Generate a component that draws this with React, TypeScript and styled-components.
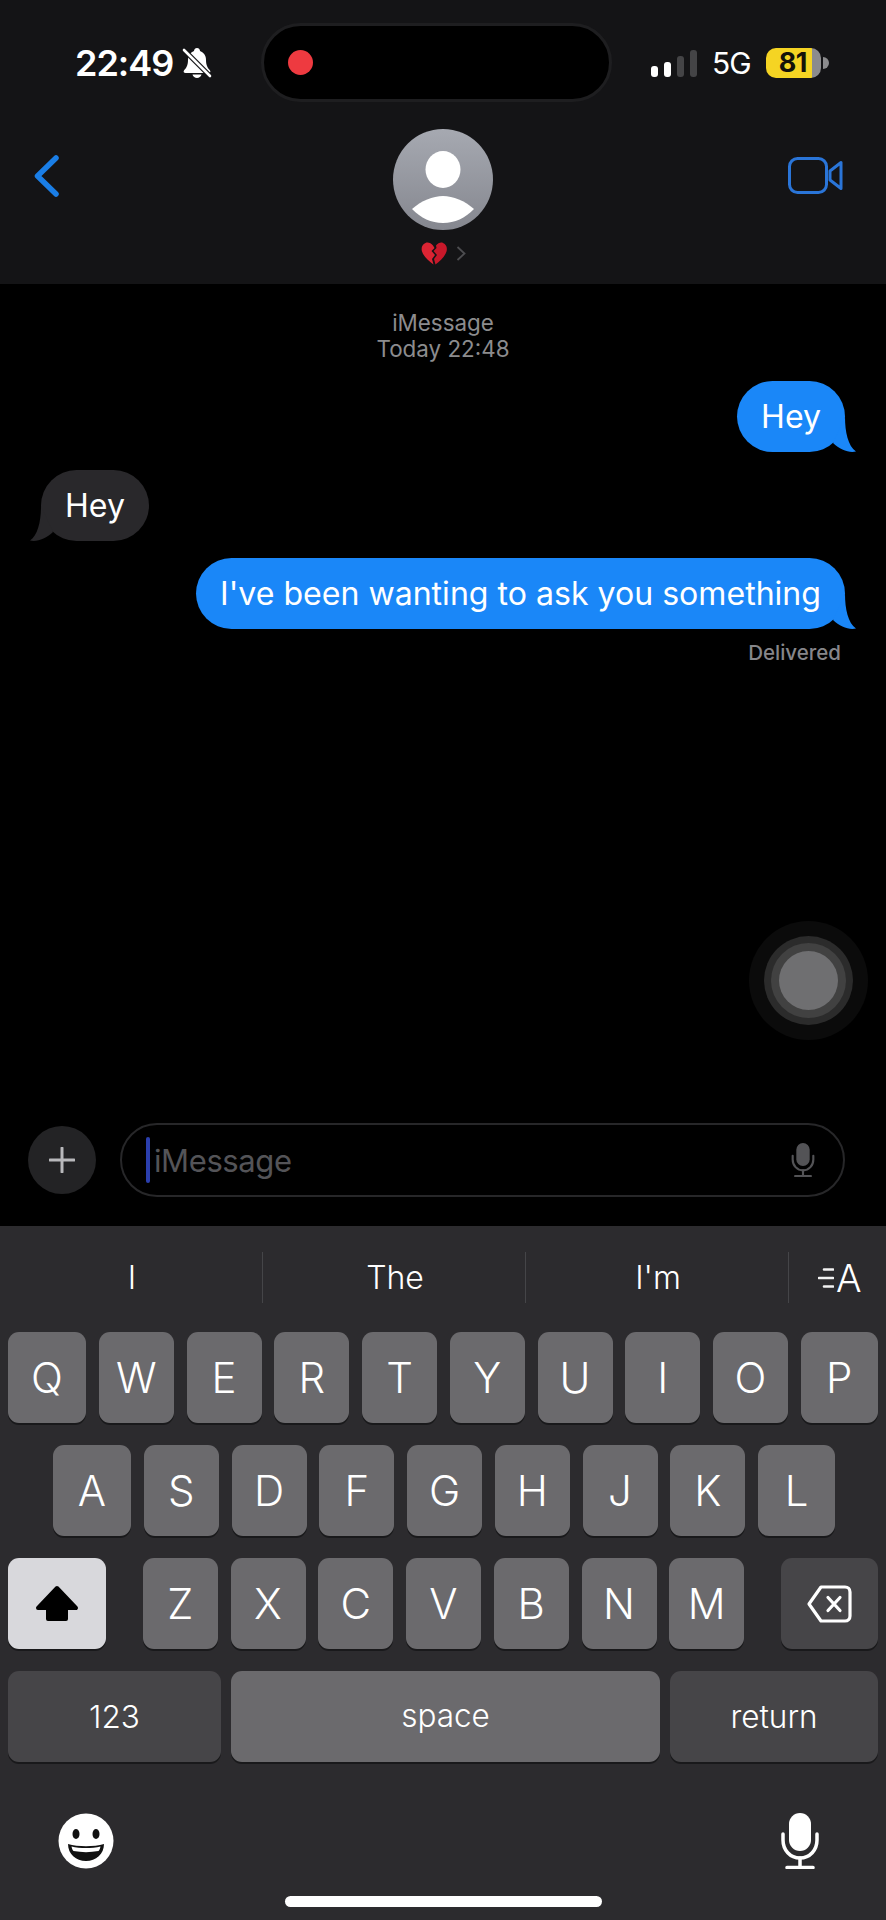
import React from 'react';
import styled, { createGlobalStyle } from 'styled-components';

const GlobalStyle = createGlobalStyle`
    html, body {
        margin: 0;
        padding: 0;
        background: #000;
    }
    body {
        font-family: Inter, "Liberation Sans", sans-serif;
        color: #fff;
    }
`

const ROW_ONE = ['Q', 'W', 'E', 'R', 'T', 'Y', 'U', 'I', 'O', 'P'];
const ROW_TWO = ['A', 'S', 'D', 'F', 'G', 'H', 'J', 'K', 'L'];
const ROW_THREE = ['Z', 'X', 'C', 'V', 'B', 'N', 'M'];

function Tail({ color, $left }: { color: string; $left?: boolean }) {
    return (
        <TailSvg $left={$left} width="30" height="40" viewBox="0 0 30 40">
            <path d="M19 5C19 20 22 34 30 39.5C23 41 14 38 7 31Z" fill={color}/>
        </TailSvg>
    )
}

function MicIcon({ color, width, height, stroke }: { color: string; width: number; height: number; stroke: number }) {
    return (
        <svg width={width} height={height} viewBox="0 0 38 56" fill="none">
            <rect x="8" y="0" width="22" height="38" rx="11" fill={color}/>
            <path d="M2 21V27C2 37 9 45 19 45C29 45 36 37 36 27V21" stroke={color} strokeWidth={stroke} strokeLinecap="round"/>
            <path d="M19 45V54M6 54.500H32" stroke={color} strokeWidth={stroke} strokeLinecap="round"/>
        </svg>
    )
}

function App() {
    return (
        <Screen>
            <GlobalStyle/>
            <Header>
                <StatusBar>
                    <StatusLeft>
                        <Time>22:49</Time>
                        <svg width="30" height="31" viewBox="0 0 30 31">
                            <path d="M15 1C17 1 18 2.500 18 4C22 5.500 24 9 24 13C24 19 26 21 28 23.500C29 25 28 26 26.500 26H3.500C2 26 1 25 2 23.500C4 21 6 19 6 13C6 9 8 5.500 12 4C12 2.500 13 1 15 1Z" fill="#fff"/>
                            <path d="M10.500 27.500H19.500C19 29.500 17 31 15 31C13 31 11 29.500 10.500 27.500Z" fill="#fff"/>
                            <path d="M2 3L28 29" stroke="#141416" strokeWidth="5"/>
                            <path d="M2 3L28 29" stroke="#fff" strokeWidth="2.600" strokeLinecap="round"/>
                        </svg>
                    </StatusLeft>
                    <Island>
                        <RecDot/>
                    </Island>
                    <StatusRight>
                        <Signal>
                            <SignalBar $h={11} $on/>
                            <SignalBar $h={15} $on/>
                            <SignalBar $h={21}/>
                            <SignalBar $h={27}/>
                        </Signal>
                        <Network>5G</Network>
                        <Battery>81</Battery>
                        <BatteryNub/>
                    </StatusRight>
                </StatusBar>
                <Nav>
                    <BackIcon width="25" height="42" viewBox="0 0 25 42" fill="none">
                        <path d="M22 3L3.500 21L22 39" stroke="#1a7ee6" strokeWidth="5.500" strokeLinecap="round" strokeLinejoin="round"/>
                    </BackIcon>
                    <Contact>
                        <svg width="100" height="101" viewBox="0 0 100 101">
                            <defs>
                                <linearGradient id="avatarFill" x1="0" y1="0" x2="0" y2="1">
                                    <stop offset="0" stopColor="#a6a9b1"/>
                                    <stop offset="1" stopColor="#85878f"/>
                                </linearGradient>
                            </defs>
                            <ellipse cx="50" cy="50.500" rx="50" ry="50.500" fill="url(#avatarFill)"/>
                            <ellipse cx="50" cy="40.500" rx="17.500" ry="18.500" fill="#fff"/>
                            <path d="M19 80C28 72 40 67 50 67C60 67 72 72 81 80C72 89 62 94 50 94C38 94 28 89 19 80Z" fill="#fff"/>
                        </svg>
                        <ContactName>
                            <svg width="26" height="23" viewBox="0 0 26 23">
                                <path d="M12 3.500C10 1 7 0 4.500 1C1 2.500 0 6 1 9.500C2.500 14.500 8 19 12.500 22.500L11 17L14 13L10.500 9L13.500 6Z" fill="#dc2433"/>
                                <path d="M15 3.500C17 1 20 0 22 1C25.500 2.500 26.500 6 25.500 9.500C24 14.500 19 19 14.500 22.500L13 17L16 13L12.500 9L15.500 6Z" fill="#c8182a"/>
                            </svg>
                            <svg width="10" height="15" viewBox="0 0 10 15" fill="none">
                                <path d="M1.500 1L8.500 7.500L1.500 14" stroke="#4d4d50" strokeWidth="1.800"/>
                            </svg>
                        </ContactName>
                    </Contact>
                    <VideoIcon width="55" height="37" viewBox="0 0 55 37" fill="none">
                        <rect x="1.500" y="1.500" width="37" height="34" rx="8" stroke="#2a75d8" strokeWidth="3"/>
                        <path d="M42 14L53 5.500V31.500L42 23Z" stroke="#2a75d8" strokeWidth="3" strokeLinejoin="round"/>
                    </VideoIcon>
                </Nav>
            </Header>

            <Thread>
                <ThreadInfo>
                    <div>iMessage</div>
                    <div>Today 22:48</div>
                </ThreadInfo>
                <Bubble $mine>
                    Hey
                    <Tail color="#1a87f8"/>
                </Bubble>
                <Bubble>
                    Hey
                    <Tail color="#29282b" $left/>
                </Bubble>
                <Bubble $mine>
                    I've been wanting to ask you something
                    <Tail color="#1a87f8"/>
                </Bubble>
                <Delivered>Delivered</Delivered>

                <AssistiveTouch/>

                <Composer>
                    <PlusButton>
                        <svg width="26" height="26" viewBox="0 0 26 26" fill="none">
                            <path d="M13 1V25M1 13H25" stroke="#b8b8bb" strokeWidth="3" strokeLinecap="round"/>
                        </svg>
                    </PlusButton>
                    <InputPill>
                        <Caret/>
                        <Placeholder>iMessage</Placeholder>
                        <MicSlot>
                            <MicIcon color="#535356" width={24} height={34} stroke={3.500}/>
                        </MicSlot>
                    </InputPill>
                </Composer>
            </Thread>

            <Keyboard>
                <Suggestions>
                    <Suggestion>I</Suggestion>
                    <Suggestion>The</Suggestion>
                    <Suggestion>I'm</Suggestion>
                    <WritingTools>
                        <svg width="16" height="22" viewBox="0 0 16 22" fill="none">
                            <path d="M6 2.500H15M1 11H15M6 19.500H15" stroke="#f2f2f2" strokeWidth="2.600" strokeLinecap="round"/>
                        </svg>
                        <span>A</span>
                    </WritingTools>
                </Suggestions>

                <LetterRow>
                    {ROW_ONE.map((letter) => <Key key={letter}>{letter}</Key>)}
                </LetterRow>
                <LetterRow $inset>
                    {ROW_TWO.map((letter) => <Key key={letter}>{letter}</Key>)}
                </LetterRow>
                <ShiftRow>
                    <Key $tone="light" $width={98}>
                        <svg width="44" height="37" viewBox="0 0 44 37">
                            <path d="M22 3L41 23H31V34H13V23H3Z" fill="#000" stroke="#000" strokeWidth="4" strokeLinejoin="round"/>
                        </svg>
                    </Key>
                    <LetterGroup>
                        {ROW_THREE.map((letter) => <Key key={letter}>{letter}</Key>)}
                    </LetterGroup>
                    <Key $tone="dark" $width={97}>
                        <svg width="45" height="38" viewBox="0 0 45 38" fill="none">
                            <path d="M14 2H38C41 2 43 4 43 7V31C43 34 41 36 38 36H14L2 19Z" stroke="#fff" strokeWidth="3.200" strokeLinejoin="round"/>
                            <path d="M21 12.500L33 25.500M33 12.500L21 25.500" stroke="#fff" strokeWidth="3.200" strokeLinecap="round"/>
                        </svg>
                    </Key>
                </ShiftRow>
                <BottomRow>
                    <ActionKey $tone="dark" $width={213}>123</ActionKey>
                    <ActionKey $width={429} $lift={3}>space</ActionKey>
                    <ActionKey $tone="dark" $width={208}>return</ActionKey>
                </BottomRow>

                <KeyboardFooter>
                    <svg width="56" height="56" viewBox="0 0 56 56">
                        <circle cx="28" cy="28" r="27.500" fill="#fff"/>
                        <ellipse cx="18" cy="21" rx="3.500" ry="5" fill="#111"/>
                        <ellipse cx="38" cy="21" rx="3.500" ry="5" fill="#111"/>
                        <path d="M10 31C20 34 36 34 46 31C46 41 38 48 28 48C18 48 10 41 10 31Z" fill="#111"/>
                        <path d="M13.500 33.500C22 35.500 34 35.500 42.500 33.500C42 35.500 41.500 37 40.500 38C32 39.500 24 39.500 15.500 38C14.500 37 14 35.500 13.500 33.500Z" fill="#fff"/>
                    </svg>
                    <MicIcon color="#fff" width={38} height={56} stroke={3.500}/>
                </KeyboardFooter>
                <HomeBar/>
            </Keyboard>
        </Screen>
    )
}

const Screen = styled.div`
    width: 886px;
    height: 1920px;
    display: flex;
    flex-direction: column;
    overflow: hidden;
    background-color: #000;
`

const Header = styled.header`
    height: 284px;
    flex: none;
    background-color: #141416;
`

const StatusBar = styled.div`
    display: grid;
    grid-template-columns: 261px 351px 1fr;
    padding-top: 23px;
    height: 79px;
`

const StatusLeft = styled.div`
    display: flex;
    align-items: center;
    gap: 9px;
    padding-left: 75px;
`

const Time = styled.span`
    font-size: 36px;
    font-weight: 600;
    letter-spacing: -1px;
`

const Island = styled.div`
    display: flex;
    align-items: center;
    height: 79px;
    box-sizing: border-box;
    padding-left: 24px;
    border: 3px solid #1e1e20;
    border-radius: 40px;
    background-color: #000;
`

const RecDot = styled.div`
    width: 25px;
    height: 25px;
    border-radius: 50%;
    background-color: #ee3a40;
`

const StatusRight = styled.div`
    display: flex;
    align-items: center;
    padding-left: 39px;
`

const Signal = styled.div`
    display: flex;
    align-items: flex-end;
    gap: 6px;
    height: 27px;
    margin-top: 1px;
`

const SignalBar = styled.div<{ $h: number; $on?: boolean }>`
    width: 7px;
    height: ${(p) => p.$h}px;
    border-radius: 3px;
    background-color: ${(p) => (p.$on ? '#fff' : '#444446')};
`

const Network = styled.span`
    margin-left: 15px;
    font-size: 30px;
    font-weight: 400;
    letter-spacing: -1px;
`

const Battery = styled.div`
    width: 55px;
    height: 30px;
    margin-left: 15px;
    box-sizing: border-box;
    padding-left: 13px;
    border-radius: 10px;
    background: linear-gradient(90deg, #f5d423 0, #f5d423 46px, #8b8b8d 46px);
    color: #14120a;
    font-size: 27px;
    font-weight: 700;
    line-height: 30px;
    letter-spacing: -0.5px;
`

const BatteryNub = styled.div`
    width: 6px;
    height: 12px;
    margin-left: 2px;
    border-radius: 0 6px 6px 0;
    background-color: #8b8b8d;
`

const Nav = styled.nav`
    display: grid;
    grid-template-columns: 359px 100px 1fr;
    padding: 27px 43px 0 34px;
`

const BackIcon = styled.svg`
    margin-top: 26px;
`

const VideoIcon = styled.svg`
    margin-top: 28px;
    justify-self: end;
`

const Contact = styled.div`
    display: flex;
    flex-direction: column;
    align-items: center;
    gap: 12px;
`

const ContactName = styled.div`
    display: flex;
    align-items: center;
    gap: 9px;
`

const Thread = styled.main`
    position: relative;
    flex: 1;
    display: flex;
    flex-direction: column;
    padding: 26px 41px 0;
`

const ThreadInfo = styled.div`
    text-align: center;
    color: #8c8c8e;
    font-size: 22.400px;
    font-weight: 400;
    line-height: 26px;
    margin-bottom: 19px;
`

const Bubble = styled.div<{ $mine?: boolean }>`
    position: relative;
    align-self: ${(p) => (p.$mine ? 'flex-end' : 'flex-start')};
    height: 71px;
    padding: 0 24px;
    margin-bottom: 17.500px;
    border-radius: 36px;
    background-color: ${(p) => (p.$mine ? '#1a87f8' : '#29282b')};
    font-size: 32.100px;
    font-weight: 400;
    line-height: 72px;
    white-space: nowrap;
`

const TailSvg = styled.svg<{ $left?: boolean }>`
    position: absolute;
    bottom: 0;
    ${(p) => (p.$left ? 'left: -11px; transform: scaleX(-1);' : 'right: -11px;')}
`

const Delivered = styled.div`
    align-self: flex-end;
    margin-top: -6px;
    margin-right: 4px;
    color: #86868a;
    font-size: 20.500px;
    font-weight: 500;
    line-height: 24px;
`

const AssistiveTouch = styled.div`
    position: absolute;
    right: 48px;
    bottom: 216px;
    width: 59px;
    height: 59px;
    border-radius: 50%;
    background-color: #6f6f71;
    box-shadow: 0 0 0 8px #414141, 0 0 0 15px #2b2b2b, 0 0 0 30px #0b0b0b;
`

const Composer = styled.div`
    display: flex;
    align-items: center;
    gap: 24px;
    margin: auto -41px 29px 0;
    padding-right: 41px;
    margin-left: -13px;
`

const PlusButton = styled.div`
    display: flex;
    align-items: center;
    justify-content: center;
    width: 68px;
    height: 68px;
    flex: none;
    border-radius: 50%;
    background-color: #232325;
`

const InputPill = styled.div`
    flex: 1;
    display: flex;
    align-items: center;
    height: 74px;
    box-sizing: border-box;
    padding: 0 28px 0 24px;
    border: 2px solid #272729;
    border-radius: 37px;
`

const Caret = styled.div`
    width: 4px;
    height: 46px;
    border-radius: 2px;
    background-color: #2b3fae;
`

const Placeholder = styled.span`
    margin-left: 4px;
    color: #545458;
    font-size: 31px;
    letter-spacing: -0.4px;
`

const MicSlot = styled.div`
    margin-left: auto;
    display: flex;
`

const Keyboard = styled.section`
    height: 694px;
    flex: none;
    box-sizing: border-box;
    background-color: #2c2b2e;
`

const Suggestions = styled.div`
    display: grid;
    grid-template-columns: 263px 263px 263px 1fr;
    height: 51px;
    padding: 26px 0 29px;
`

const Suggestion = styled.div`
    display: flex;
    align-items: center;
    justify-content: center;
    padding-left: 2px;
    border-right: 1px solid #454548;
    font-size: 32px;
    font-weight: 300;
`

const WritingTools = styled.div`
    display: flex;
    align-items: center;
    gap: 2px;
    padding-left: 29px;
    font-size: 38px;
    font-weight: 300;
`

const keyTones = {
    normal: '#6b6a6d',
    dark: '#464548',
    light: '#d8d8dc',
}

const Key = styled.div<{ $tone?: 'normal' | 'dark' | 'light'; $width?: number; $lift?: number }>`
    display: flex;
    align-items: center;
    justify-content: center;
    width: ${(p) => p.$width || 75}px;
    height: 91px;
    flex: none;
    box-sizing: border-box;
    padding-bottom: ${(p) => p.$lift || 0}px;
    border-radius: 11px;
    background-color: ${(p) => keyTones[p.$tone || 'normal']};
    box-shadow: 0 2px 0 #19191b;
    font-size: 42px;
    font-weight: 300;
`

const ActionKey = styled(Key)`
    font-size: 31.500px;
    font-weight: 300;
`

const LetterRow = styled.div<{ $inset?: boolean }>`
    display: grid;
    grid-template-columns: 78px repeat(${(p) => (p.$inset ? 7 : 8)}, 75px) 77px;
    column-gap: 12.750px;
    padding-left: ${(p) => (p.$inset ? 53 : 8)}px;
    margin-bottom: 22px;

    & > div {
        width: auto;
    }
`

const ShiftRow = styled.div`
    display: flex;
    justify-content: space-between;
    padding: 0 8px;
    margin-bottom: 22px;
`

const LetterGroup = styled.div`
    display: flex;
    gap: 12.750px;
`

const BottomRow = styled.div`
    display: flex;
    justify-content: space-between;
    padding: 0 8px;
`

const KeyboardFooter = styled.div`
    display: flex;
    align-items: center;
    justify-content: space-between;
    height: 56px;
    margin-top: 51px;
    padding: 0 67px 0 58px;
`

const HomeBar = styled.div`
    width: 317px;
    height: 11px;
    margin: 27px auto 0;
    border-radius: 6px;
    background-color: #fff;
`

export default App;
